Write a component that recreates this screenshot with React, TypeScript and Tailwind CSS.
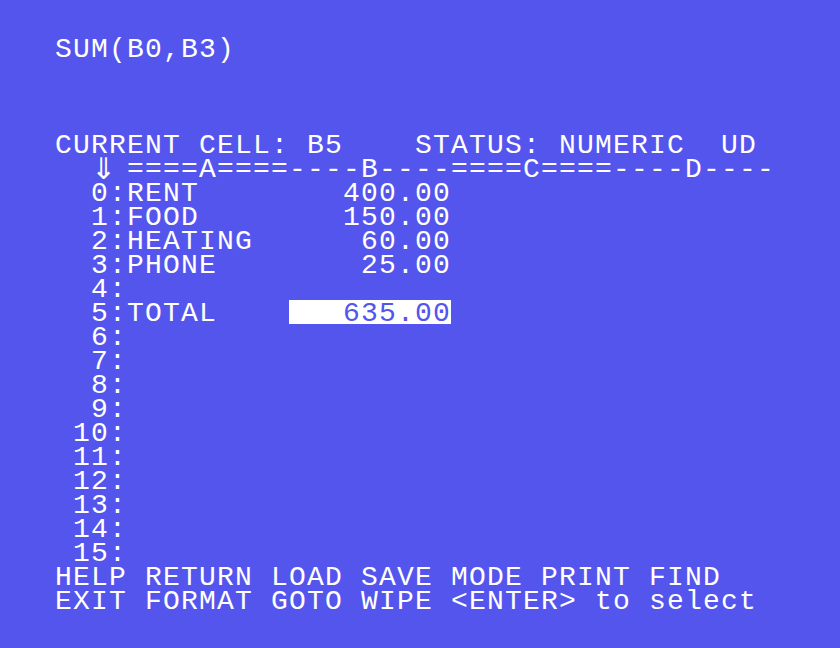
const rows: string[] = [
  "SUM(B0,B3)",
  "",
  "",
  "",
  "CURRENT CELL: B5    STATUS: NUMERIC  UD",
  "ARROW",
  "  0:RENT        400.00",
  "  1:FOOD        150.00",
  "  2:HEATING      60.00",
  "  3:PHONE        25.00",
  "  4:",
  "TOTAL",
  "  6:",
  "  7:",
  "  8:",
  "  9:",
  " 10:",
  " 11:",
  " 12:",
  " 13:",
  " 14:",
  " 15:",
  "HELP RETURN LOAD SAVE MODE PRINT FIND",
  "EXIT FORMAT GOTO WIPE <ENTER> to select",
];

// one 40-column text line of the MSX screen, 18px per char, 24px per row
function Row({ text }: { text: string }) {
  if (text === "ARROW") {
    return (
      <div className="h-6 leading-[28px] whitespace-pre">
        {"  "}
        <span className="inline-block w-[18px] h-6 align-top text-center leading-[26px] font-['DejaVu_Sans',sans-serif] text-[30px] tracking-normal">
          ⇓
        </span>
        {" ====A====----B----====C====----D----"}
      </div>
    );
  }
  if (text === "TOTAL") {
    return (
      <div className="h-6 leading-[28px] whitespace-pre">
        {"  5:TOTAL    "}
        <span className="inline-block h-6 align-top bg-white text-[#5455ed]">{"   635.00"}</span>
      </div>
    );
  }
  return <div className="h-6 leading-[28px] whitespace-pre">{text}</div>;
}

export default function App() {
  return (
    <div className="w-[840px] h-[648px] bg-[#5455ed] overflow-hidden">
      <div className="pt-[36px] pl-[55px] text-white font-['Liberation_Mono','DejaVu_Sans_Mono',monospace] text-[28px] tracking-[1.2px]">
        {rows.map((r, i) => (
          <Row key={i} text={r} />
        ))}
      </div>
    </div>
  );
}
